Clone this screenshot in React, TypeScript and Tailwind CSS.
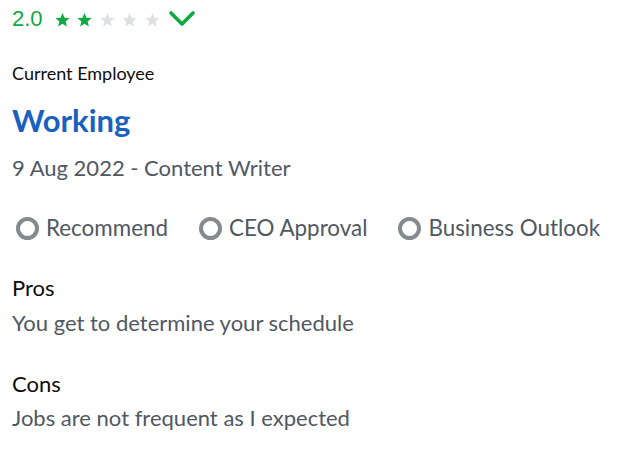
import React from "react";

const Star = ({ filled }: { filled: boolean }) => (
  <svg width="15" height="15" viewBox="0 0 24 24" className={filled ? "text-[#0caa41]" : "text-[#dee0e3]"}>
    <path fill="currentColor" d="M12 1.5l3.1 7.6 8.2.6-6.3 5.3 2 8-7-4.3-7 4.3 2-8L.7 9.7l8.2-.6z" />
  </svg>
);

const Radio = ({ label }: { label: string }) => (
  <div className="flex items-center gap-[7px]">
    <span className="w-[23px] h-[23px] rounded-full border-[4px] border-[#858a8f] box-border" />
    <span>{label}</span>
  </div>
);

export default function App() {
  return (
    <div className="w-[619px] h-[450px] bg-white overflow-hidden font-['Lato',sans-serif] text-[#505863] pl-[12px]">
      <div className="flex items-center h-[38px]">
        <span className="font-['Liberation_Sans',sans-serif] text-[22px] text-[#0caa41] leading-none mr-[12px]">2.0</span>
        <div className="flex gap-[7.5px] items-center">
          <Star filled />
          <Star filled />
          <Star filled={false} />
          <Star filled={false} />
          <Star filled={false} />
        </div>
        <svg width="28" height="20" viewBox="0 0 28 20" className="ml-[8px]">
          <path d="M3 4l11 11L25 4" fill="none" stroke="#0caa41" strokeWidth="3.6" strokeLinecap="round" strokeLinejoin="round" />
        </svg>
      </div>
      <div className="mt-[24px] text-[18px] text-[#0d0d0d] leading-[22px]">Current Employee</div>
      <h2 className="mt-[18px] text-[31px] font-bold text-[#1861bf] leading-[37px]">Working</h2>
      <div className="mt-[16px] text-[22px] leading-[26px]">9 Aug 2022 - Content Writer</div>
      <div className="mt-[34px] flex items-center gap-[31px] text-[22.4px] leading-[26px] pl-[4px]">
        <Radio label="Recommend" />
        <Radio label="CEO Approval" />
        <Radio label="Business Outlook" />
      </div>
      <div className="mt-[34px] text-[22px] leading-[26px] text-[#0d0d0d]">Pros</div>
      <div className="mt-[9px] text-[22px] leading-[26px]">You get to determine your schedule</div>
      <div className="mt-[35px] text-[22px] leading-[26px] text-[#0d0d0d]">Cons</div>
      <div className="mt-[8px] text-[22px] leading-[26px]">Jobs are not frequent as I expected</div>
    </div>
  );
}
